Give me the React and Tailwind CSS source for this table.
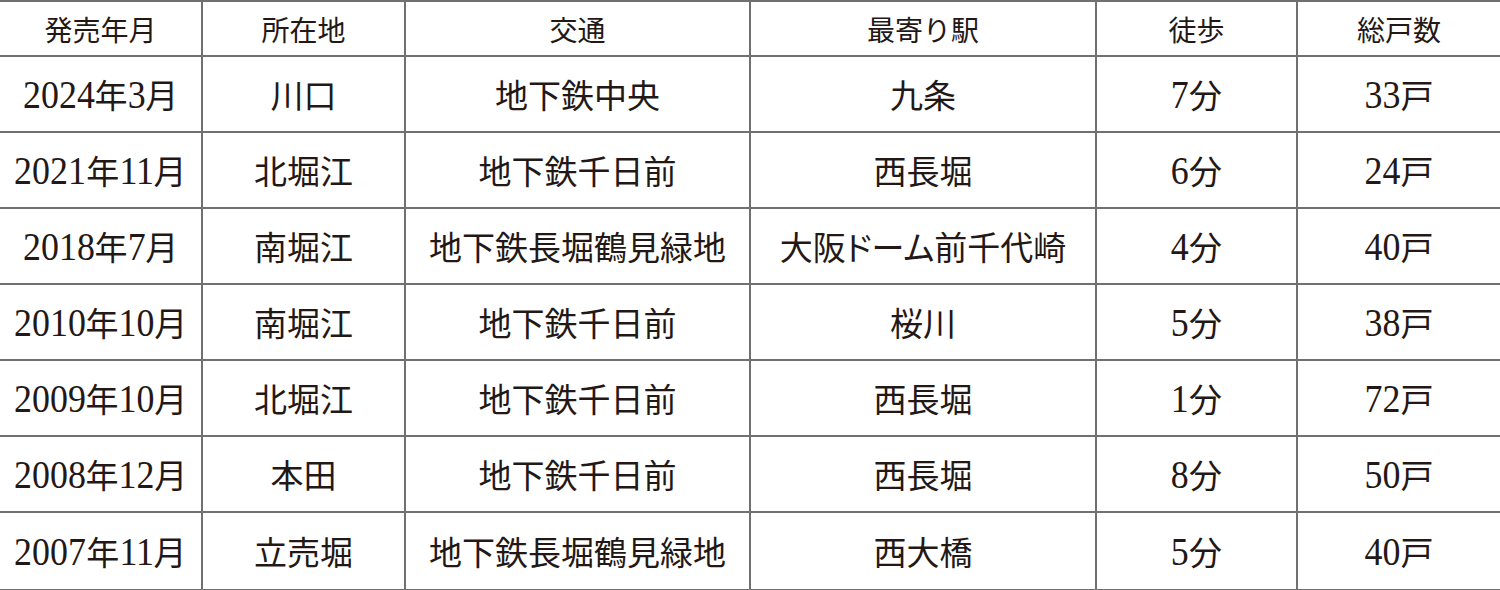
import React from "react";

const rows = [
    ["2024", "3", "川口", "地下鉄中央", "九条", "7", "33"],
    ["2021", "11", "北堀江", "地下鉄千日前", "西長堀", "6", "24"],
    ["2018", "7", "南堀江", "地下鉄長堀鶴見緑地", "大阪ドーム前千代崎", "4", "40"],
    ["2010", "10", "南堀江", "地下鉄千日前", "桜川", "5", "38"],
    ["2009", "10", "北堀江", "地下鉄千日前", "西長堀", "1", "72"],
    ["2008", "12", "本田", "地下鉄千日前", "西長堀", "8", "50"],
    ["2007", "11", "立売堀", "地下鉄長堀鶴見緑地", "西大橋", "5", "40"],
];

const headers = ["発売年月", "所在地", "交通", "最寄り駅", "徒歩", "総戸数"];

// digits are a condensed serif in the print original
const squeeze = {
    1: "-mx-[0.8px]",
    2: "-mx-[1.6px]",
    4: "-mx-[3.1px]",
};

function Num({ v }) {
    return (
        <span className={`inline-block scale-x-[0.92] text-[39px] font-['Liberation_Serif',serif] ${squeeze[v.length]}`}>
            {v}
        </span>
    );
}

function Cell({ first, children, head, prop }) {
    return (
        <div
            className={
                "flex items-center justify-center whitespace-nowrap " +
                (first ? "" : "border-l-2 border-[#707070] ") +
                (head ? "text-[28px] " : "text-[33px] ") +
                (prop ? "[font-feature-settings:'palt']" : "")
            }
        >
            <span>{children}</span>
        </div>
    );
}

export default function App() {
    return (
        <div className="w-[1500px] h-[590px] bg-white text-[#231815] font-['Noto_Sans_CJK_JP',sans-serif] leading-none">
            <div className="border-t-2 border-b-2 border-[#707070]">
                <div className="grid grid-cols-[201px_203px_345px_346px_201px_204px] h-[55px] border-b-2 border-[#707070]">
                    {headers.map((h, i) => (
                        <Cell key={h} first={i === 0} head>
                            {h}
                        </Cell>
                    ))}
                </div>
                {rows.map((r, idx) => (
                    <div
                        key={idx}
                        className={
                            "grid grid-cols-[201px_203px_345px_346px_201px_204px] h-[76px] " +
                            (idx < rows.length - 1 ? "border-b-2 border-[#707070]" : "")
                        }
                    >
                        <Cell first>
                            <Num v={r[0]} />年<Num v={r[1]} />月
                        </Cell>
                        <Cell>{r[2]}</Cell>
                        <Cell>{r[3]}</Cell>
                        <Cell prop>{r[4]}</Cell>
                        <Cell>
                            <Num v={r[5]} />分
                        </Cell>
                        <Cell>
                            <Num v={r[6]} />戸
                        </Cell>
                    </div>
                ))}
            </div>
        </div>
    );
}
